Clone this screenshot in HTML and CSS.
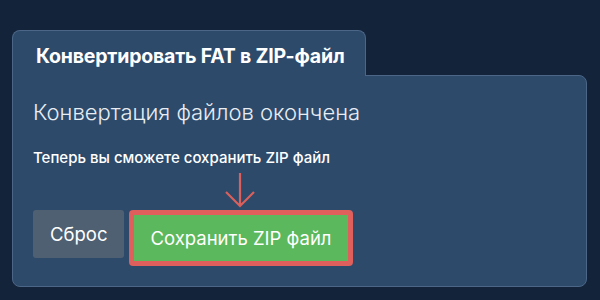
FILE: index.html
```html
<!DOCTYPE html>
<html lang="ru">
<head>
    <meta charset="UTF-8">
    <meta name="viewport" content="width=device-width, initial-scale=1.0">
    <title>Конвертировать FAT в ZIP-файл</title>
    <link rel="stylesheet" href="styles.css">
</head>
<body>
    <div class="converter">
        <div class="tab">Конвертировать FAT в ZIP-файл</div>
        <div class="panel">
            <h2 class="status">Конвертация файлов окончена</h2>
            <p class="hint">Теперь вы сможете сохранить ZIP файл</p>
            <div class="actions">
                <button class="btn btn-reset">Сброс</button>
                <div class="save-wrap">
                    <svg class="arrow" width="30" height="36" viewBox="0 0 30 36">
                        <path d="M15 1 V34 M1 20 L15 34 L29 20" fill="none" stroke="#d9605c" stroke-width="2.2"/>
                    </svg>
                    <button class="btn btn-save">Сохранить ZIP файл</button>
                </div>
            </div>
        </div>
    </div>
</body>
</html>
```

FILE: styles.css
```css
html, body {
    margin: 0;
    height: 100%;
}

body {
    font-family: Inter, "Noto Sans", sans-serif;
    background-color: #12233a;
    color: #fff;
}

.converter {
    padding: 30px 13px 0 12px;
}

.tab {
    position: relative;
    display: inline-block;
    box-sizing: border-box;
    width: 354px;
    height: 46px;
    padding: 13px 0 0 23px;
    margin-bottom: -1px;
    font-size: 19.5px;
    font-weight: 700;
    letter-spacing: -0.2px;
    background-color: #2d4a6b;
    border: 1px solid #4b6687;
    border-bottom: none;
    border-radius: 8px 8px 0 0;
}

.panel {
    box-sizing: border-box;
    height: 212px;
    padding: 0 20px;
    background-color: #2d4a6b;
    border: 1px solid #4b6687;
    border-radius: 0 8px 8px 8px;
}

.status {
    margin: 22px 0 0;
    font-size: 22px;
    font-weight: 300;
    line-height: 28px;
    color: #e8edf3;
}

.hint {
    margin: 23px 0 0;
    font-size: 15px;
    font-weight: 500;
    line-height: 18px;
}

.actions {
    display: flex;
    align-items: flex-start;
    gap: 5px;
    margin-top: 43px;
}

.btn {
    font-family: inherit;
    font-size: 18.5px;
    color: #fff;
    border: none;
    border-radius: 3px;
    padding: 0 17px;
    cursor: pointer;
}

.btn-reset {
    height: 48px;
    background-color: #4f6072;
}

.save-wrap {
    position: relative;
}

.arrow {
    position: absolute;
    left: 96px;
    top: -38px;
}

.btn-save {
    height: 56px;
    padding: 0 16px;
    background-color: #5cb85c;
    border: 5px solid #de5f5c;
    border-radius: 4px;
}
```
